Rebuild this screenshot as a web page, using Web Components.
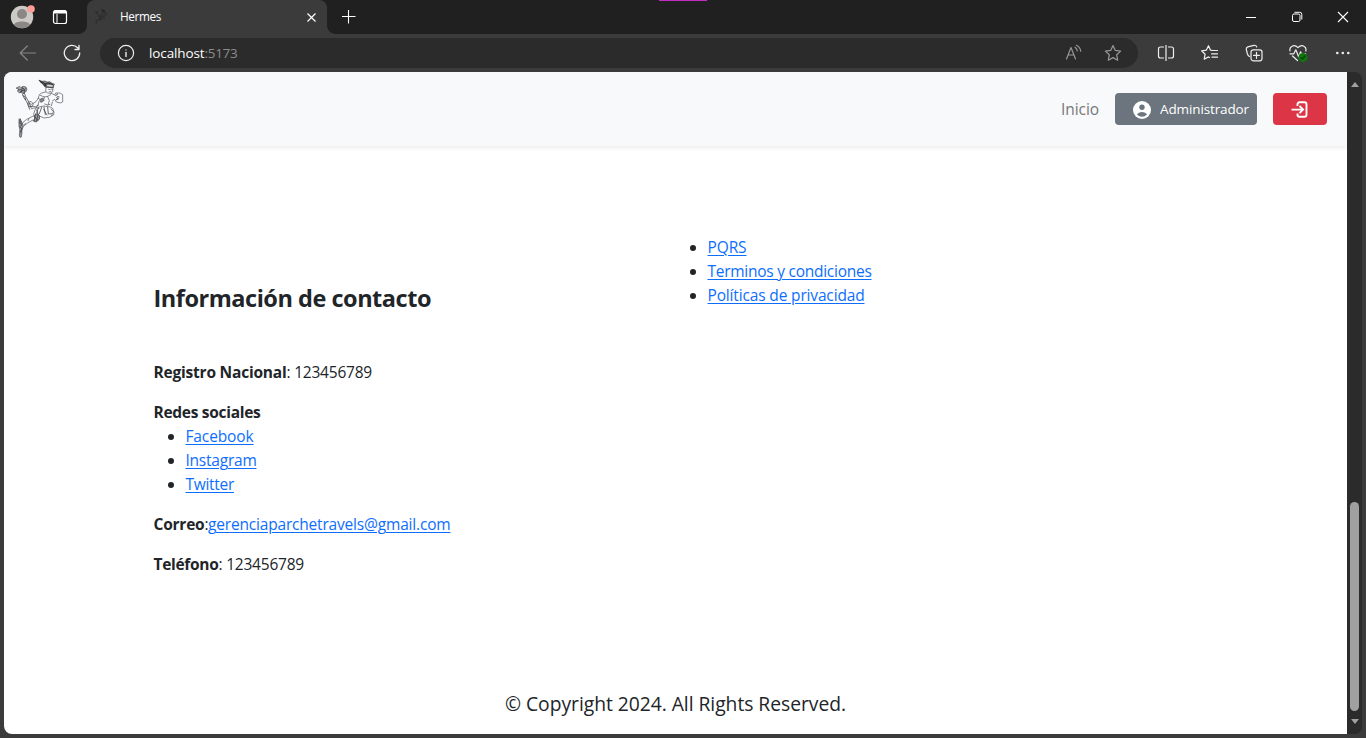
<!DOCTYPE html>
<html lang="es">
<head>
<meta charset="utf-8">
<title>Hermes</title>
<style>
html,body{margin:0;height:100%;overflow:hidden;background:#3b3b3b}
body{font-family:"Open Sans","Noto Sans",sans-serif;font-size:15.5px;font-weight:370;line-height:24px;color:#212529}
</style>
</head>
<body>
<browser-window>
  <browser-tabs slot="tabs"><fit-text w="41">Hermes</fit-text></browser-tabs>
  <browser-toolbar slot="toolbar"></browser-toolbar>
  <site-nav slot="page"></site-nav>
  <contact-section slot="page"></contact-section>
  <site-footer slot="page"><fit-text w="341">© Copyright 2024. All Rights Reserved.</fit-text></site-footer>
  <scroll-bar slot="scroll"></scroll-bar>
</browser-window>
<script>
function component(name, html, ready) {
  const template = document.createElement('template');
  template.innerHTML = html;
  customElements.define(name, class extends HTMLElement {
    connectedCallback() {
      if (!this.shadowRoot) this.attachShadow({mode: 'open'}).append(template.content.cloneNode(true));
      if (ready) ready(this);
    }
  });
}

component('hermes-logo', `<style>:host{display:block;width:53.33px;height:62px}svg{display:block;width:100%;height:100%}</style>
<svg viewBox="36 24 160 186" fill="none" stroke="#45484c" stroke-width="1.9" stroke-linecap="round" stroke-linejoin="round">
<path d="M106 31l9 3 7-1 8 3 7-1 6 4 9 4-10 2-8-1-10 1-8-4-7-5z" fill="#888"/>
<path d="M107 32l12 13 9 3M113 35l13 8M121 46l7-7 12 1 9 7-3 5-21-1z" stroke="#222" stroke-width="3"/>
<path d="M124 50l25 3M126 53l-1 11 6 5 9 1 6-5 1-13M134 58l5 1M142 57l3 1M136 65h5"/>
<path d="M125 66l-12 3-7 5-3 10-7 11-13 8-8-3M141 70l14 6M145 97l-3 10M153 73l2-4h13l8 5v22l-7 3-12-3-5-8-7 5"/>
<path d="M156 76l5-4M158 83l5 3M161 80l4 1M157 89l5-2" stroke-width="3"/>
<path d="M109 76l12 5 10-2 9-5M121 81l-2 10-10 5M131 80l5 12-4 13M122 102l9 3 7-2M103 85l8 5M105 94l-3 11"/>
<path d="M110 87l6-3 4 7-6 6-6-4z" fill="#888"/>
<path d="M37 54l10-5 4 4 6-4 9 2 3 8-4 7-7 4-8-4-5 2-5-5 4-5z" fill="#aaa"/>
<path d="M43 60l9-1 5-5 6 7-8 2-7 5M55 52l-3 14M66 56l-16 8M59 71l3-8" stroke-width="2.6"/>
<path d="M55 71l4 11 9 13 9 23M61 69l4 11 10 17 6 16M57 77l6 3 2 10" stroke-width="2.3"/>
<path d="M73 97l8-3 7 8-3 7-9 1zM78 109l17 1 9-5M82 116l15-3 8 2"/>
<path d="M101 106l-8 14-4 12 3 8M105 111l14-3 20 3 7 4 4 12-1 8-13 7-17 2-17-8"/>
<path d="M103 112l-5 18 8 7-1 11-8 8-8-3M113 112l-7 19M120 111l4 23M131 112l2 20 10-1M98 120l5 14-8 18M119 118l10 17" stroke-width="2.4"/>
<path d="M91 137l8-5 8 6-1 9-10 9-7-4 4-8z" fill="#999"/>
<path d="M95 131l-5 22M102 134l-5 18M90 140l12 9" stroke-width="2.6"/>
<path d="M88 138l-20 10-11 9-7 11M87 150l-15 8-15 12-5 15M75 146l-3 6M65 161l-7 4M143 137l5-12-7-8"/>
<path d="M46 147l4 2 4 9 3 13-4 9 1 8-2 13-4 1-2-7 2-14-3-13z" fill="#999"/>
<path d="M49 147l-2 13 7 4-7 6 7 6-3 9M47 153l7 8M47 183l5 5" stroke-width="2.7"/>
</svg>`);

component('browser-window', `<style>
:host{display:grid;grid-template-rows:34px 38px 662px 4px;width:1366px;height:738px;background:#3b3b3b}
.view{display:flex;margin:0 4px;border-radius:8px;overflow:hidden;background:#2b2b2b}
main{display:flex;flex-direction:column;width:1343px;background:#fff}
</style><slot name="tabs"></slot><slot name="toolbar"></slot><div class="view"><main><slot name="page"></slot></main><slot name="scroll"></slot></div>`);

component('browser-tabs', `<style>
:host{display:flex;position:relative;background:#202020;color:#fff;font-size:11.800px;font-weight:400;line-height:33px;height:34px}
svg{display:block;fill:none;stroke:#fff}
.left{width:87px;display:flex}.avatar{margin:4px 0 0 10px}.work{margin:9px 0 0 16px}
.tab{width:240px;box-sizing:border-box;padding-left:8px;display:flex;background:#3b3b3b;border-radius:8px 8px 0 0;position:relative}
.tab:before,.tab:after{content:"";position:absolute;bottom:0;width:8px;height:8px}
.tab:before{left:-8px;background:radial-gradient(circle at 0 0,transparent 7.5px,#3b3b3b 8px)}
.tab:after{right:-8px;background:radial-gradient(circle at 100% 0,transparent 7.5px,#3b3b3b 8px)}
hermes-logo{width:14px;height:16px;margin:9px 11px 0 0;filter:brightness(.4)}
.close{margin:12px 10px 0 auto}.plus{margin:9px 0 0 14px}.win{display:flex;margin-left:auto;padding-top:11px;gap:34px;padding-right:17px}
.accent{position:absolute;left:659px;top:0;width:48px;height:1px;background:#c42bc4}
</style>
<div class="left"><svg class="avatar" width="26" height="25" stroke="none"><circle cx="12" cy="13" r="11.2" fill="#cbcac7" stroke="none"/><circle cx="12" cy="10" r="5" fill="#8a8784" stroke="none"/><path d="M4 20.5c1.500-4 14.500-4 16 0-4 5-12 5-16 0z" fill="#8a8784" stroke="none"/><circle cx="21" cy="5" r="3.8" fill="#ff9d98" stroke="none"/></svg>
<svg class="work" width="16" height="16" stroke-width="1.200"><rect x="1.500" y="1.500" width="13" height="13" rx="2"/><path d="M5 5v9" stroke-width="1"/><path d="M2 3h12" stroke-width="3"/></svg></div>
<div class="tab"><hermes-logo></hermes-logo><slot></slot><svg class="close" width="11" height="11"><path d="M1.500 1.500l8 8M9.500 1.500l-8 8" stroke-width="1.200"/></svg></div>
<svg class="plus" width="15" height="15"><path d="M7.500 1v13.500M1 7.500h13.500" stroke-width="1.100"/></svg>
<div class="win"><svg width="12" height="12"><path d="M1 6.500h10"/></svg><svg width="12" height="12"><rect x="1.500" y="3" width="7.500" height="7.500" rx="1.500"/><path d="M3.500 1.300h5.300q2 0 2 2v5.200"/></svg><svg width="12" height="12"><path d="M1 1l10 10M11 1L1 11" stroke-width="1.100"/></svg></div><div class="accent"></div>`);

component('browser-toolbar', `<style>
:host{display:flex;align-items:center;background:#3b3b3b;color:#fff;height:38px;font-size:13.500px;font-weight:400}
svg{display:block;fill:none;stroke:#eee;stroke-width:1.200;stroke-linecap:round;stroke-linejoin:round}
.back{margin-left:19px;stroke:#858585}.reload{margin-left:26px}
.bar{display:flex;align-items:center;width:1038px;height:30px;margin-left:19px;border-radius:15px;background:#2b2b2b;box-sizing:border-box;padding:0 16px 0 17px}
.addr{margin-left:14px;display:flex}.port{color:#8b8b8b}.bar .dim{stroke:#989898}.read{margin-left:auto;margin-right:21px}
.tools{display:flex;margin-left:18.500px;gap:26.300px}
</style>
<svg class="back" width="18" height="18"><path d="M16.500 9h-15.300M8.300 2L1.200 9l7.100 7"/></svg>
<svg class="reload" width="18" height="18" style="stroke-width:1.300"><path d="M16.700 9A7.700 7.700 0 1 1 14.600 3.700L16 5.200M16 1.500v4h-4"/></svg>
<div class="bar"><svg width="18" height="18"><circle cx="9" cy="9" r="7.600"/><path d="M9 8.500v4" stroke-width="1.400"/><circle cx="9" cy="5.900" r=".7" fill="#ddd" stroke="none"/></svg>
<div class="addr"><fit-text w="55.500">localhost</fit-text><fit-text class="port" w="33">:5173</fit-text></div>
<svg class="dim read" width="18" height="18"><path d="M1.500 15L6 3.500l4.500 11.500M3.200 11h5.700M10 3.200q2 1.300 2.300 3.700M11.500 1.200q3.800 2 4.200 6"/></svg>
<svg class="dim" width="18" height="18"><path d="M9 1.500l2.300 4.900 5.300.7-3.900 3.700 1 5.400L9 13.600l-4.700 2.600 1-5.400L1.400 7.100l5.300-.7z"/></svg></div>
<div class="tools">
<svg width="18" height="18"><path d="M7 3H3.500q-2 0-2 2v7q0 2 2 2H7M11 3h3.500q2 0 2 2v7q0 2-2 2H11M9 1v16" stroke-linecap="butt"/></svg>
<svg width="18" height="18"><path d="M11.300 6.300l-1.900-.2L7.500 1.700 5.400 6.100l-4.800.7 3.500 3.400-.9 5 4.300-2.300 1 .6M12 6.500h4.500M10.500 9.800h6M11 13.200h5.500"/></svg>
<svg width="18" height="18"><rect x="6" y="5.800" width="11" height="11" rx="2.200"/><path d="M11.500 8.300v6M8.500 11.300h6M4.500 12.500Q3 12 2.300 9.500L1.300 5.500q-.3-2 1.500-2.600L9 1.300q2-.4 2.700 1.700"/></svg>
<svg width="19" height="18"><path d="M1 7C0 2.500 5-.2 9 3.600 13-.2 18 2.500 16.800 7M1 9.800h3.800l2-4 2.800 7 2-5 1 2h4M3.500 12l5 4.500"/><circle cx="14" cy="13.500" r="4.600" fill="#10750f" stroke="none"/><path d="M12 13.700l1.300 1.300 2.800-3" stroke="#063f06"/></svg>
<svg width="16" height="18"><g fill="#eee" stroke="none"><circle cx="2.300" cy="9" r="1.300"/><circle cx="7.800" cy="9" r="1.300"/><circle cx="13.300" cy="9" r="1.300"/></g></svg>
</div>`);

component('site-nav', `<style>
:host{display:flex;align-items:center;box-sizing:border-box;height:74px;padding:0 20px 0 12px;background:#f8f9fb;box-shadow:0 2px 4px rgba(0,0,0,.075);position:relative}
nav{display:flex;align-items:center;gap:16px;margin-left:auto}.link{color:#777879}
.btn{box-sizing:border-box;height:32px;border-radius:4px;background:#6c757d;color:#fff;display:flex;align-items:center;font-size:13.500px;font-weight:480}
.user{width:142px;padding-left:18px;gap:9px}.exit{width:54px;background:#dc3545;justify-content:center}svg{display:block;position:relative;top:.6px}
</style><hermes-logo></hermes-logo><nav><fit-text class="link" w="38">Inicio</fit-text>
<div class="btn user"><svg width="18" height="18"><circle cx="9" cy="9" r="9" fill="#fff"/><circle cx="9" cy="6.200" r="2.700" fill="#6c757d"/><path d="M3.800 13.200Q9 8.800 14.200 13.200Q9 18.500 3.800 13.200z" fill="#6c757d"/></svg><fit-text w="89">Administrador</fit-text></div>
<div class="btn exit"><svg width="18" height="18" fill="none" stroke="#fff" stroke-width="1.900"><path d="M6.500 5V3.300q0-2 2-2h5q2 0 2 2v10.500q0 2-2 2h-5q-2 0-2-2V12.500M.5 8.600H12M8.500 5l3.600 3.600-3.600 3.600"/></svg></div></nav>`);

component('link-list', `<style>:host{display:block}ul{margin:0;padding-left:32px}</style><ul></ul>`, el => {
  el.shadowRoot.querySelector('ul').innerHTML = '<style>li{height:24px}a{color:#0d6efd;text-decoration:underline;text-underline-offset:2px;text-decoration-thickness:1px}</style>' +
    el.getAttribute('items').split('|').map(x => { const [t, w] = x.split('='); return `<li><a><fit-text w="${w}" style="display:inline">${t}</fit-text></a></li>`; }).join('');
});

component('contact-section', `<style>
:host{display:grid;grid-template-columns:671.500px 671.500px;padding-top:89px;height:453px;box-sizing:border-box}
.info{padding:49px 0 0 149.500px}h2{margin:0 0 47px;font-size:23.500px;line-height:29px;font-weight:700}p{margin:0 0 16px;height:24px;white-space:nowrap}
b{font-weight:700}.tight{margin:0}link-list.social{margin-bottom:16px}a{color:#0d6efd;text-decoration:underline;text-underline-offset:2px;text-decoration-thickness:1px}
</style><div class="info"><h2><fit-text w="277.500">Información de contacto</fit-text></h2>
<p><b><fit-text w="133">Registro Nacional</fit-text></b><fit-text w="85.500">: 123456789</fit-text></p>
<p class="tight"><b><fit-text w="107">Redes sociales</fit-text></b></p>
<link-list class="social" items="Facebook=68|Instagram=71|Twitter=48.5"></link-list>
<p><b><fit-text w="51">Correo</fit-text></b><fit-text w="3.500">:</fit-text><a><fit-text w="242.500" style="display:inline">gerenciaparchetravels@gmail.com</fit-text></a></p>
<p><b><fit-text w="65">Teléfono</fit-text></b><fit-text w="85.500">: 123456789</fit-text></p></div>
<link-list items="PQRS=39|Terminos y condiciones=164|Políticas de privacidad=157"></link-list>`);

component('site-footer', `<style>:host{display:flex;justify-content:center;padding-top:90px;font-size:19.300px;line-height:30px}</style><slot></slot>`);

component('scroll-bar', `<style>:host{display:flex;flex-direction:column;align-items:center;width:15px;background:#2b2b2b}
.up,.down{width:0;height:0;border:4.500px solid transparent}.up{border-top:0;border-bottom:5px solid #a0a0a0;margin-top:10px}.down{border-bottom:0;border-top:5px solid #a0a0a0;margin:8px 0 10px}
.thumb{width:9px;height:209px;margin-top:auto;border-radius:5px;background:#a0a0a0}</style><div class="up"></div><div class="thumb"></div><div class="down"></div>`);

/* Tracks a run of text so that it fills a given advance width.
   Registered last: it measures with the styles of the elements around it. */
component('fit-text', `<style>:host{display:inline-block;white-space:pre}</style><slot></slot>`, el => {
  el.style.letterSpacing = '0px';
  const w = el.getBoundingClientRect().width, n = el.textContent.length;
  if (w) el.style.letterSpacing = ((+el.getAttribute('w') - w) / n).toFixed(4) + 'px';
});
</script>
</body>
</html>
